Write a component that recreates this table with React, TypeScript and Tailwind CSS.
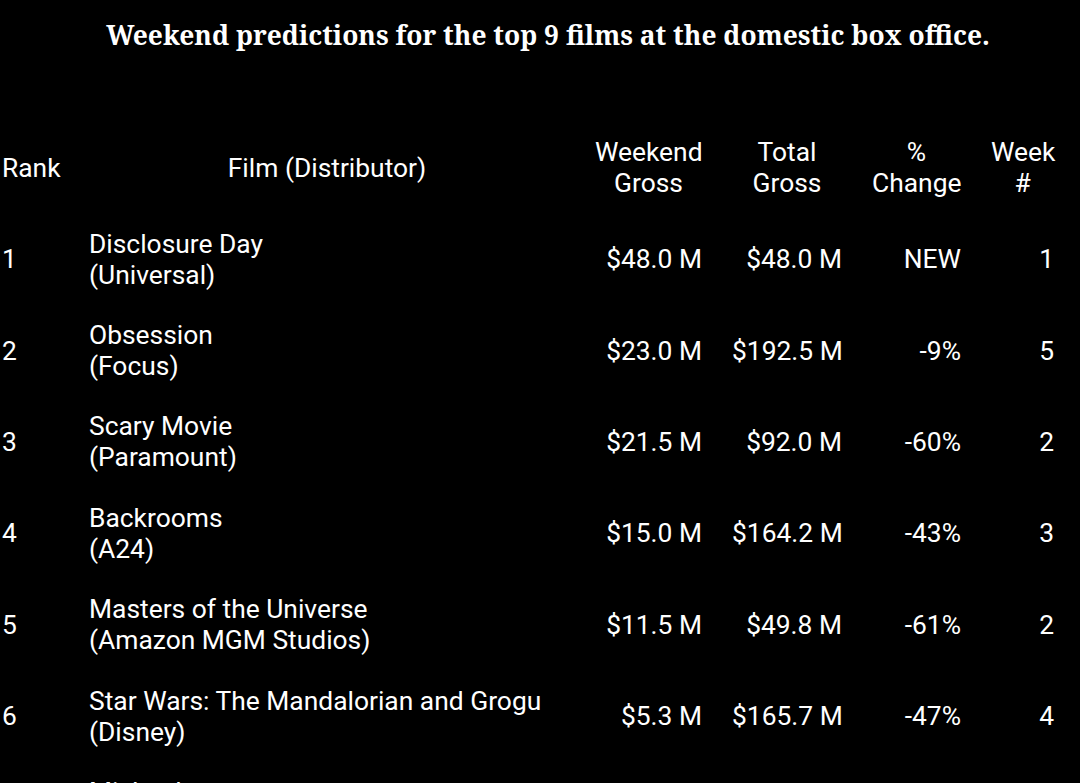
import React from "react";

const rows = [
  ["1", "Disclosure Day", "(Universal)", "$48.0 M", "$48.0 M", "NEW", "1"],
  ["2", "Obsession", "(Focus)", "$23.0 M", "$192.5 M", "-9%", "5"],
  ["3", "Scary Movie", "(Paramount)", "$21.5 M", "$92.0 M", "-60%", "2"],
  ["4", "Backrooms", "(A24)", "$15.0 M", "$164.2 M", "-43%", "3"],
  ["5", "Masters of the Universe", "(Amazon MGM Studios)", "$11.5 M", "$49.8 M", "-61%", "2"],
  ["6", "Star Wars: The Mandalorian and Grogu", "(Disney)", "$5.3 M", "$165.7 M", "-47%", "4"],
  ["7", "Michael", "(Lionsgate)", "$4.8 M", "$290.1 M", "-38%", "8"],
];

const grid = "grid grid-cols-[74px_506px_137px_140px_119px_93px] items-center";

export default function App() {
  return (
    <div className="w-[1080px] h-[783px] overflow-hidden bg-black text-white">
      <h1 className="pt-[17px] pl-[16px] text-center text-[26.4px] font-bold leading-[36px] whitespace-nowrap font-['Noto_Serif','DejaVu_Serif',serif]">
        Weekend predictions for the top 9 films at the domestic box office.
      </h1>
      <div className="mt-[69px] text-[26.4px] leading-[31px] font-['Roboto','Liberation_Sans',sans-serif]">
        <div className={grid + " py-[15px]"}>
          <div className="pl-[2px]">Rank</div>
          <div className="px-[15px] text-center">Film (Distributor)</div>
          <div className="px-[15px] text-center">Weekend<br />Gross</div>
          <div className="px-[15px] text-center">Total<br />Gross</div>
          <div className="px-[15px] text-center">%<br />Change</div>
          <div className="px-[15px] text-center">Week<br />#</div>
        </div>
        {rows.map((r) => (
          <div key={r[0]} className={grid + " py-[14.7px]"}>
            <div className="pl-[2px]">{r[0]}</div>
            <div className="px-[15px] whitespace-nowrap">
              <div>{r[1]}</div>
              <div>{r[2]}</div>
            </div>
            <div className="px-[15px] text-right whitespace-nowrap">{r[3]}</div>
            <div className="px-[15px] text-right whitespace-nowrap">{r[4]}</div>
            <div className="px-[15px] text-right">{r[5]}</div>
            <div className="px-[15px] text-right">{r[6]}</div>
          </div>
        ))}
      </div>
    </div>
  );
}
